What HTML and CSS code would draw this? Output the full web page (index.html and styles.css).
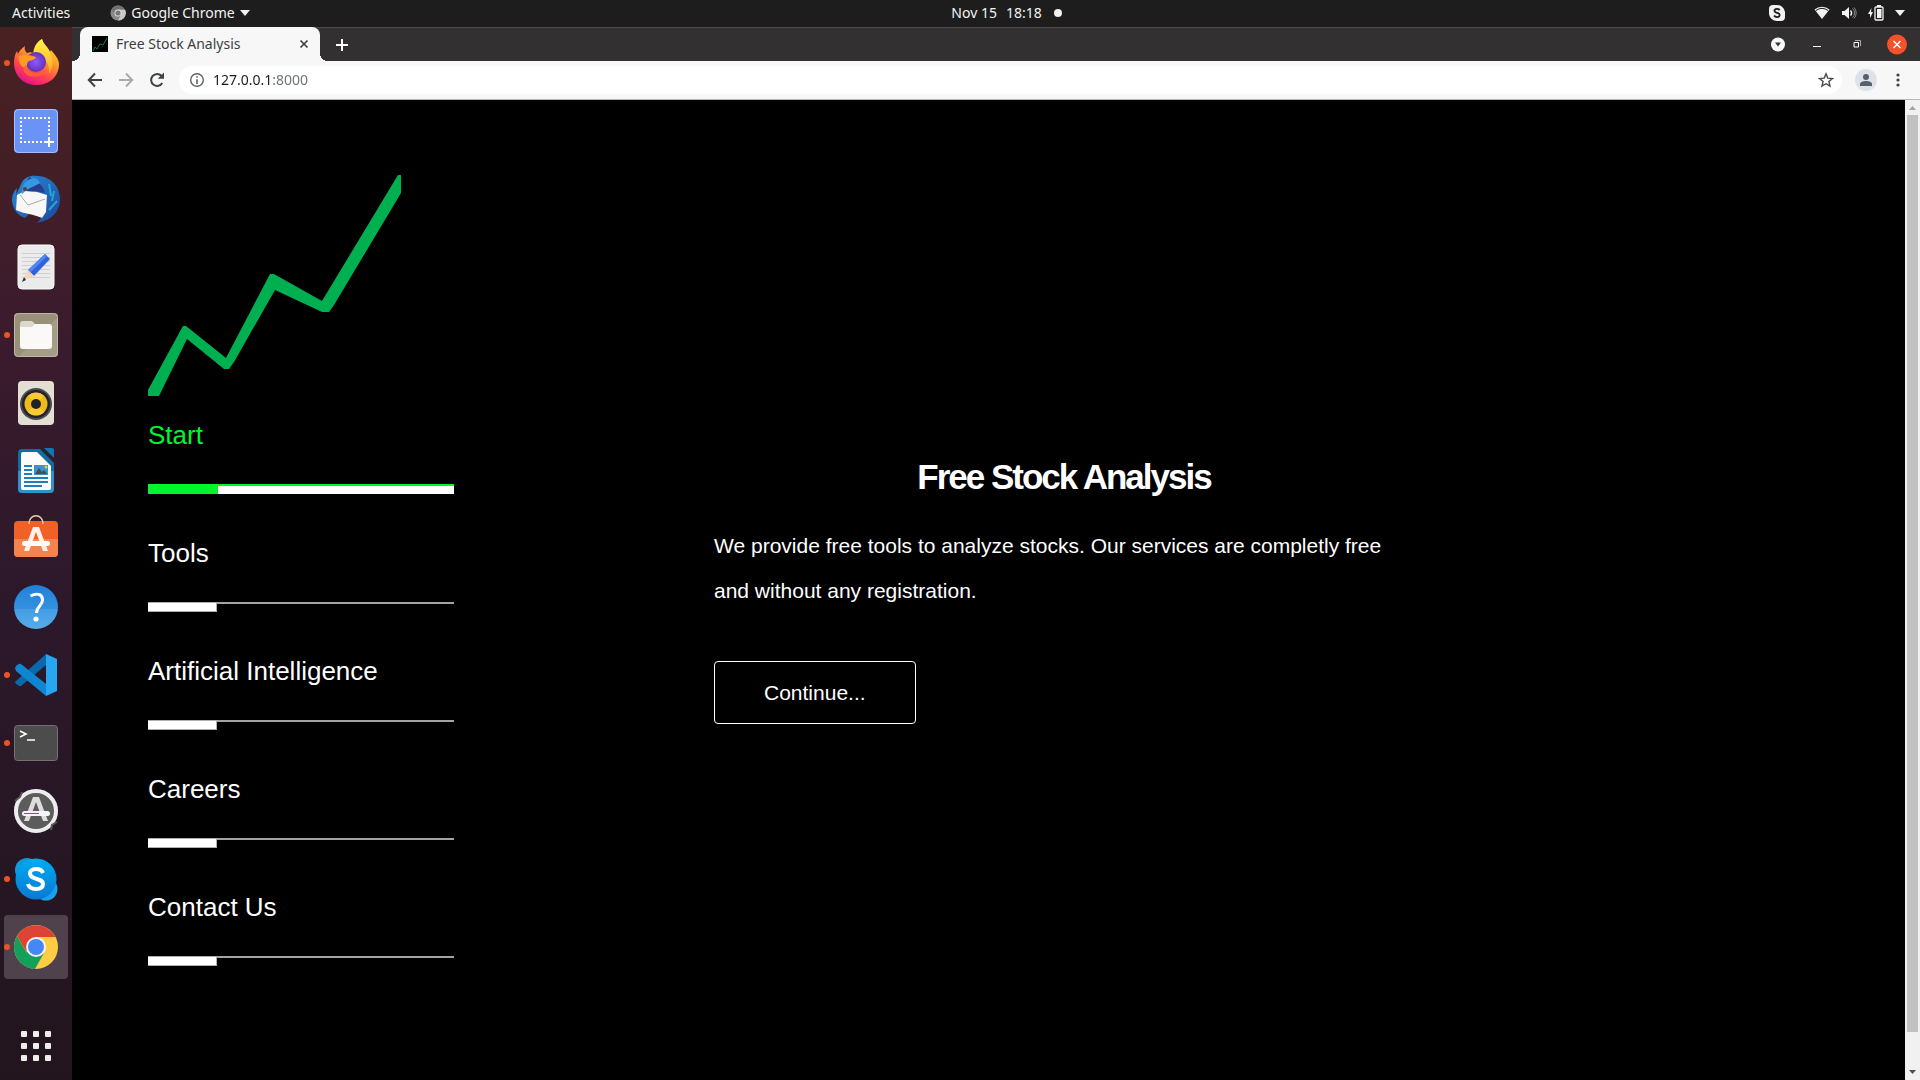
FILE: index.html
```html
<!DOCTYPE html>
<html lang="en">
<head>
<meta charset="utf-8">
<meta name="viewport" content="width=device-width, initial-scale=1">
<title>Free Stock Analysis</title>
<link rel="stylesheet" href="styles.css">
</head>
<body>
<div class="desktop">
  <header class="topbar">
    <div class="topbar-left">
      <button class="plain" type="button">Activities</button>
      <button class="plain app-menu" type="button">
        <svg width="16" height="16" viewBox="0 0 16 16"><circle cx="8" cy="8" r="7.500" fill="#8a8a8a"/><path d="M8 4.500h7A7.500 7.500 0 0 1 8 15.500l3-5.500z" fill="#c9c9c9"/><path d="M1.500 4.500A7.500 7.500 0 0 1 14.700 4.500H8L5 9.500z" fill="#737373"/><circle cx="8" cy="8" r="3.600" fill="#ddd"/><circle cx="8" cy="8" r="2.600" fill="#777"/></svg>
        <span>Google Chrome</span>
        <svg width="10" height="6" viewBox="0 0 10 6"><path d="M0 0h10L5 6z" fill="#f2f2f2"/></svg>
      </button>
    </div>
    <div class="clock"><span>Nov 15</span><span>18:18</span><span class="clock-dot"></span></div>
    <div class="tray">
      <svg class="tray-app" width="16" height="16" viewBox="0 0 16 16"><path d="M4 0h4a8 8 0 0 1 8 7v5a4 4 0 0 1-4 4H8a8 8 0 0 1-8-7V4a4 4 0 0 1 4-4z" fill="#f2f2f2"/><path d="M10.600 5.200C10 4.100 9 3.800 8 3.800c-1.400 0-2.500.7-2.500 1.900 0 2.900 5.200 1.500 5.200 4.200 0 1.400-1.200 2.200-2.700 2.200-1.300 0-2.300-.5-2.900-1.600" fill="none" stroke="#1d1d1d" stroke-width="1.800"/></svg>
      <svg width="16" height="16" viewBox="0 0 16 16"><path d="M8 14 .5 4.500a12 12 0 0 1 15 0z" fill="#f2f2f2"/><path d="M1.800 5.600a10.500 10.500 0 0 1 12.400 0" fill="none" stroke="#1d1d1d" stroke-width="1"/></svg>
      <svg width="16" height="16" viewBox="0 0 16 16"><path d="M1 6h2.500L8 2v12L3.500 10H1z" fill="#f2f2f2"/><path d="M9.500 5.500a3.500 3.500 0 0 1 0 5" fill="none" stroke="#f2f2f2" stroke-width="1.500"/><path d="M11.500 3.500a6 6 0 0 1 0 9M13 2.500a8 8 0 0 1 0 11" fill="none" stroke="#888"/></svg>
      <svg width="16" height="16" viewBox="0 0 16 16"><path d="M3.500 3 0 9h2v4l3-6H3z" fill="#f2f2f2"/><path d="M9 0h4v2H9z" fill="#f2f2f2"/><rect x="7" y="2" width="8" height="13" rx="1" fill="none" stroke="#f2f2f2" stroke-width="1.300"/><path d="M9 4h4.500v9H9z" fill="#f2f2f2"/></svg>
      <svg width="10" height="6" viewBox="0 0 10 6"><path d="M0 0h10L5 6z" fill="#f2f2f2"/></svg>
    </div>
  </header>

  <div class="workspace">
    <nav class="dock" aria-label="Dock">
      <button class="dock-item running" type="button" aria-label="Firefox">
        <svg width="48" height="48" viewBox="0 0 48 48">
          <defs><linearGradient id="ffa" x1=".8" y1="0" x2=".3" y2="1"><stop offset="0" stop-color="#ffe23a"/><stop offset=".4" stop-color="#ff9a26"/><stop offset=".72" stop-color="#ff4250"/><stop offset="1" stop-color="#e0108c"/></linearGradient><linearGradient id="ffb" x1="0" y1="0" x2="0" y2="1"><stop offset="0" stop-color="#fff44a"/><stop offset="1" stop-color="#ffa52b"/></linearGradient><radialGradient id="ffc"><stop offset="0" stop-color="#8d5cff"/><stop offset="1" stop-color="#6131b8"/></radialGradient></defs>
          <path d="M30 0c1 5 6 8 8 13l1-2c4 5 8 9 8 14 0 13-10 21-23 21S2 36 2 24c0-5 1-9 3-12l1 3c1-3 4-6 7-8-1 3 0 5 2 7 2-1 5-1 7 0 1-6 4-11 8-14z" fill="url(#ffa)"/>
          <path d="M30 0c1 5 6 8 8 13 4 7 3 15-1 22 1-12-5-17-12-18-4-1-4-4-3-7 1-4 4-8 8-10z" fill="url(#ffb)"/>
          <circle cx="24" cy="23" r="10" fill="url(#ffc)"/>
          <path d="M7 17c5-2 11-1 17 1-1 3-4 3-7 4-2 1-2 4-3 8-5-2-8-7-7-13z" fill="#ff9b22"/><path d="M14 26c2 8 12 11 19 6-3 6-15 8-20 2-2-3-2-6 1-8z" fill="#ff6038"/>
        </svg>
      </button>
      <button class="dock-item" type="button" aria-label="Screenshot">
        <svg width="48" height="48" viewBox="0 0 48 48"><rect x="2" y="2" width="44" height="44" rx="4" fill="#6b92f5"/><rect x="2.500" y="2.500" width="43" height="43" rx="4" fill="none" stroke="#a5beff"/><path d="M8 11h31M8 35h23M9 14v20M37 14v14" fill="none" stroke="#fff" stroke-width="2" stroke-dasharray="2 2"/><path d="M37 30v10M32 35h10" stroke="#fff" stroke-width="2"/></svg>
      </button>
      <button class="dock-item" type="button" aria-label="Thunderbird">
        <svg width="48" height="48" viewBox="0 0 48 48">
          <defs><linearGradient id="tb" x1="0" y1="0" x2="1" y2="1"><stop offset="0" stop-color="#2c8bd8"/><stop offset="1" stop-color="#1b479c"/></linearGradient></defs>
          <path d="M10 7C13 2 19 0 25 1c14 0 23 11 23 23 0 10-6 19-16 22l-7 2 7-8 3-18L13 43c-8-3-12-9-13-17 0-6 2-10 5-13l-1 7z" fill="url(#tb)"/>
          <path d="M17 2c6 3 14 7 16 16l-10-2-13 4 3-9z" fill="#293d8f"/><path d="M5 20 13 16l12 1 10 3-1 17-4 6C22 39 12 39 4 35z" fill="#f7f7f7"/><path d="m8 20 8 10 17-6" fill="none" stroke="#aaa"/><path d="M10 19C9 10 14 4 22 3c4 1 5 3 6 5-4 3-11 4-18 11z" fill="#3598e0"/><circle cx="13" cy="14" r="2" fill="#5b4136"/><path d="m37 9 2 12M42 16l-2 10m5 0-8 9" stroke="#23a4d8" stroke-width="2"/>
        </svg>
      </button>
      <button class="dock-item" type="button" aria-label="Text Editor">
        <svg width="48" height="48" viewBox="0 0 48 48"><rect x="6" y="2" width="36" height="44" rx="4" fill="#ebebeb" stroke="#fafafa"/><path d="M10 10.500h28M10 14.500h28M10 18.500h28M10 22.500h28M10 26.500h28M10 30.500h28M10 34.500h28" stroke="#cfcfcf"/><path d="m16 27 17-16 5 5-16 17z" fill="#2f62dc"/><path d="m16 27 17-16 2 2-17 17z" fill="#5287f0"/><path d="m16 27 6 6-12 5z" fill="#f5d6bd"/><path d="m12 34 2 3-4 2z" fill="#333"/></svg>
      </button>
      <button class="dock-item running" type="button" aria-label="Files">
        <svg width="48" height="48" viewBox="0 0 48 48"><rect x="2" y="2" width="44" height="44" rx="4" fill="#989079"/><path d="M46 6v36a4 4 0 0 1-4 4H6z" fill="#a49d87"/><rect x="2.500" y="2.500" width="43" height="43" rx="4" fill="none" stroke="#bcb6a3"/><path d="M8 13q0-3 3-3h9l3 3v6H8z" fill="#dcd8ca"/><path d="M8 16h12l3-3h14q3 0 3 3v19q0 3-3 3H11q-3 0-3-3z" fill="#faf9f7"/></svg>
      </button>
      <button class="dock-item" type="button" aria-label="Rhythmbox">
        <svg width="48" height="48" viewBox="0 0 48 48"><rect x="6" y="2" width="36" height="44" rx="4" fill="#e3dfd2"/><circle cx="24" cy="25" r="16" fill="#4b4c55"/><circle cx="24" cy="25" r="14" fill="#22232a"/><circle cx="24" cy="25" r="11.500" fill="#f0b91c"/><path d="m24 25-8-8a11.500 11.500 0 0 1 16 0zM24 25l-8 8a11.500 11.500 0 0 0 16 0z" fill="#f7ca35"/><circle cx="24" cy="25" r="5" fill="#222"/></svg>
      </button>
      <button class="dock-item" type="button" aria-label="LibreOffice Writer">
        <svg width="48" height="48" viewBox="0 0 48 48"><path d="M10 2h18l14 14v26a4 4 0 0 1-4 4H10a4 4 0 0 1-4-4V6a4 4 0 0 1 4-4z" fill="#0f6da5"/><path d="M6 24h36v18a4 4 0 0 1-4 4H10a4 4 0 0 1-4-4z" fill="#2f93c8"/><path d="M11 5h14l14 14v22q0 2-2 2H11q-2 0-2-2V7q0-2 2-2z" fill="#fbfbfb"/><path d="M32 1h8q2 0 2 2v8z" fill="#1276b0"/><path d="M12 19h8M12 23h8M12 27h8M12 31h24M12 35h24M12 39h18" stroke="#1c7fb8" stroke-width="2"/><path d="M22 18h14v10H22z" fill="#3a92cc"/><path d="m23 27 4-6 3 4 2-2 3 4z" fill="#4d4d4d"/><circle cx="34" cy="20" r="1.500" fill="#f5c93a"/></svg>
      </button>
      <button class="dock-item" type="button" aria-label="Ubuntu Software">
        <svg width="48" height="48" viewBox="0 0 48 48"><path d="M6 6h36a4 4 0 0 1 4 4v28a4 4 0 0 1-4 4H6a4 4 0 0 1-4-4V10a4 4 0 0 1 4-4z" fill="#f06127"/><path d="M2 24h44v14a4 4 0 0 1-4 4H6a4 4 0 0 1-4-4z" fill="#f48350"/><path d="M17 9c0-11 14-11 14 0" fill="none" stroke="#f0cda0" stroke-width="1.500"/><path d="m21 12-9 24h5l7-19 7 19h5l-9-24z" fill="#fff0ea"/><rect x="10" y="26" width="28" height="5" rx="2.500" fill="#fff"/></svg>
      </button>
      <button class="dock-item" type="button" aria-label="Help">
        <svg width="48" height="48" viewBox="0 0 48 48"><defs><linearGradient id="hp" x1="0" y1="0" x2="0" y2="1"><stop offset="0" stop-color="#2080d9"/><stop offset=".54" stop-color="#3490e0"/><stop offset=".55" stop-color="#459de4"/><stop offset="1" stop-color="#55ace8"/></linearGradient></defs><circle cx="24" cy="24" r="22" fill="url(#hp)"/><path d="M18.500 13c8-4 12-1 12 4 0 6-6 6-6 13" fill="none" stroke="#fff" stroke-width="3"/><circle cx="24" cy="36" r="2.600" fill="#fff"/></svg>
      </button>
      <button class="dock-item running" type="button" aria-label="Visual Studio Code">
        <svg width="48" height="48" viewBox="0 0 48 48"><path d="M4 30 34 3v11L9 35c-2 1-6-3-6-4z" fill="#0a69ad"/><path d="M3 17c1-2 3-5 6-4l25 20v12L4 20z" fill="#0f86d4"/><path d="m34 3 11 5v32l-11 5z" fill="#27a7f2"/></svg>
      </button>
      <button class="dock-item running" type="button" aria-label="Terminal">
        <svg width="48" height="48" viewBox="0 0 48 48"><rect x="2.500" y="6.500" width="43" height="35" rx="3" fill="#4c4c4c" stroke="#727272"/><path d="m8 12 6 3-6 3M15 21h8" fill="none" stroke="#fff" stroke-width="1.600"/></svg>
      </button>
      <button class="dock-item" type="button" aria-label="Software Updater">
        <svg width="48" height="48" viewBox="0 0 48 48"><circle cx="24" cy="24" r="22" fill="#5c5c5c"/><circle cx="24" cy="24" r="20" fill="none" stroke="#ededed" stroke-width="4"/><path d="m3 14 5-4 2-5M39 43l1-5 5-3" fill="none" stroke="#555" stroke-width="2"/><path d="m21 10-9 24h5l7-19 7 19h5l-9-24z" fill="#ddd"/><rect x="10" y="24" width="28" height="5" rx="2.500" fill="#f5f5f5"/><path d="M12 26.500h15" stroke="#924d8b"/></svg>
      </button>
      <button class="dock-item running" type="button" aria-label="Skype">
        <svg width="48" height="48" viewBox="0 0 48 48"><defs><linearGradient id="sk" x1="0" y1="0" x2="0" y2="1"><stop offset="0" stop-color="#00acf0"/><stop offset="1" stop-color="#0878d4"/></linearGradient></defs><circle cx="15" cy="15" r="12" fill="#1098d8"/><circle cx="34" cy="34" r="11.500" fill="#1aa0e8"/><circle cx="24" cy="24" r="20.500" fill="url(#sk)"/><path d="M31 18c-1-3-4-4-7-4-4 0-6 2-6 4 0 8 13 4 13 11 0 4-4 5-7 5-4 0-7-1-8-5" fill="none" stroke="#fff" stroke-width="4"/></svg>
      </button>
      <button class="dock-item running active" type="button" aria-label="Google Chrome">
        <svg width="48" height="48" viewBox="0 0 48 48"><circle cx="24" cy="24" r="22" fill="#fc4"/><path d="M24 24v0L14.500 29.500 5 13A22 22 0 0 0 23 46l9-16z" fill="#14a05a"/><path d="M5 13a22 22 0 0 1 38.500 1H24l-9.500 15z" fill="#dd4436"/><circle cx="24" cy="24" r="10" fill="#f4f4f4"/><circle cx="24" cy="24" r="8" fill="#4587f4"/></svg>
      </button>
      <button class="dock-item apps" type="button" aria-label="Show Applications">
        <svg width="48" height="48" viewBox="0 0 48 48" fill="#f0eeec"><rect x="9" y="9" width="6" height="6" rx="1"/><rect x="21" y="9" width="6" height="6" rx="1"/><rect x="33" y="9" width="6" height="6" rx="1"/><rect x="9" y="21" width="6" height="6" rx="1"/><rect x="21" y="21" width="6" height="6" rx="1"/><rect x="33" y="21" width="6" height="6" rx="1"/><rect x="9" y="33" width="6" height="6" rx="1"/><rect x="21" y="33" width="6" height="6" rx="1"/><rect x="33" y="33" width="6" height="6" rx="1"/></svg>
      </button>
    </nav>

    <div class="browser">
      <div class="tabstrip">
        <div class="tab">
          <svg width="16" height="16" viewBox="0 0 16 16"><path d="M0 0h16v16H0z" fill="#000"/><path d="m1 15 2-4 2 2 3-5 3 1 4-7" fill="none" stroke="#00813d"/></svg>
          <span class="tab-title">Free Stock Analysis</span>
          <button class="plain" type="button" aria-label="Close tab"><svg width="16" height="16" viewBox="0 0 16 16"><path d="m4.500 4.500 7 7m0-7-7 7" stroke="#3c4043" stroke-width="1.700"/></svg></button>
        </div>
        <button class="plain new-tab" type="button" aria-label="New tab"><svg width="16" height="16" viewBox="0 0 16 16"><path d="M8 2v12M2 8h12" stroke="#fff" stroke-width="2"/></svg></button>
        <div class="window-controls">
          <button class="plain" type="button" aria-label="Search tabs"><svg width="24" height="24" viewBox="0 0 24 24"><circle cx="13" cy="11.500" r="7" fill="#fafafa"/><path d="M10 9.500h6l-3 4z" fill="#333"/></svg></button>
          <button class="plain" type="button" aria-label="Minimize"><svg width="24" height="24" viewBox="0 0 24 24"><path d="M8 13h8v1H8z" fill="#fff"/></svg></button>
          <button class="plain" type="button" aria-label="Restore"><svg width="24" height="24" viewBox="0 0 24 24"><path d="M9 9.500h4.500V14H9z" fill="none" stroke="#fff"/><path d="M10 7.500h5.500V13" fill="none" stroke="#aaa"/></svg></button>
          <button class="plain" type="button" aria-label="Close"><svg width="24" height="24" viewBox="0 0 24 24"><circle cx="12" cy="11.500" r="10" fill="#f4522b"/><path d="m8.500 8 7 7m0-7-7 7" stroke="#fff" stroke-width="1.500"/></svg></button>
        </div>
      </div>

      <div class="toolbar">
        <button class="plain" type="button" aria-label="Back"><svg width="18" height="18" viewBox="0 0 18 18"><path d="M16 9H3m6-6.500L2.800 9 9 15.500" fill="none" stroke="#3f4245" stroke-width="2"/></svg></button>
        <button class="plain" type="button" aria-label="Forward"><svg width="18" height="18" viewBox="0 0 18 18"><path d="M2 9h13M9 2.500 15.200 9 9 15.500" fill="none" stroke="#a9abad" stroke-width="2"/></svg></button>
        <button class="plain" type="button" aria-label="Reload"><svg width="18" height="18" viewBox="0 0 18 18"><path d="M14.300 12a6 6 0 1 1-.8-7.200" fill="none" stroke="#3f4245" stroke-width="2"/><path d="M16 1.500v6.300H9.700z" fill="#3f4245"/></svg></button>
        <div class="omnibox">
          <svg width="16" height="16" viewBox="0 0 16 16"><circle cx="8" cy="8" r="6.300" fill="none" stroke="#5f6368" stroke-width="1.400"/><path d="M7.200 7.200h1.600V12H7.200zM7.200 4.300h1.600v1.500H7.200z" fill="#5f6368"/></svg>
          <input class="address" type="text" value="127.0.0.1:8000" aria-label="Address">
          <button class="plain" type="button" aria-label="Bookmark this page"><svg width="16" height="16" viewBox="0 0 16 16"><path d="m8 1.800 1.800 4.300 4.700.4-3.600 3 1.100 4.600L8 11.700l-4 2.400 1.100-4.600-3.600-3 4.700-.4z" fill="none" stroke="#47494c" stroke-width="1.400"/></svg></button>
        </div>
        <button class="plain" type="button" aria-label="Profile"><svg width="22" height="22" viewBox="0 0 22 22"><circle cx="11" cy="11" r="11" fill="#dee1e6"/><circle cx="11" cy="8" r="3" fill="#54626f"/><path d="M5 17v-2c0-2 3-3 6-3s6 1 6 3v2z" fill="#54626f"/></svg></button>
        <button class="plain" type="button" aria-label="Menu"><svg width="16" height="16" viewBox="0 0 16 16" fill="#3f4245"><circle cx="8" cy="3" r="1.600"/><circle cx="8" cy="8" r="1.600"/><circle cx="8" cy="13" r="1.600"/></svg></button>
      </div>

      <div class="viewport">
        <div class="page">
          <aside class="menu">
            <svg class="logo" width="253" height="221" viewBox="0 0 253 221"><path d="M0 215 35 151h3l40 32 44-84h4l48 27L250 0h3v18l-67 112-5 7h-7l-47-22-41 72-5 7h-5L39 164 11 221H0z" fill="#00b050"/></svg>
            <nav class="menu-list" aria-label="Main">
              <a class="menu-link current" href="#start">Start<span class="rule"><span class="mark"></span></span></a>
              <a class="menu-link" href="#tools">Tools<span class="rule"><span class="mark"></span></span></a>
              <a class="menu-link" href="#ai">Artificial Intelligence<span class="rule"><span class="mark"></span></span></a>
              <a class="menu-link" href="#careers">Careers<span class="rule"><span class="mark"></span></span></a>
              <a class="menu-link" href="#contact">Contact Us<span class="rule"><span class="mark"></span></span></a>
            </nav>
          </aside>
          <main class="hero">
            <h1>Free Stock Analysis</h1>
            <p>We provide free tools to analyze stocks. Our services are completly free and without any registration.</p>
            <button class="continue" type="button">Continue...</button>
          </main>
        </div>
        <div class="scrollbar" aria-hidden="true">
          <svg width="15" height="15" viewBox="0 0 15 15"><path d="M4 10h7L7.500 6z" fill="#a3a3a3"/></svg>
          <div class="track"><div class="thumb"></div></div>
          <svg width="15" height="15" viewBox="0 0 15 15"><path d="M4 5h7L7.500 9z" fill="#505050"/></svg>
        </div>
      </div>
    </div>
  </div>
</div>
</body>
</html>
```
FILE: styles.css
```css
* { box-sizing: border-box; }

body {
  margin: 0;
  background: #000;
  font-family: "Liberation Sans", Arial, sans-serif;
}

svg { display: block; flex: none; }

.desktop {
  display: flex;
  flex-direction: column;
  min-height: 100vh;
}

.plain {
  display: flex;
  align-items: center;
  padding: 0;
  border: 0;
  background: none;
  color: inherit;
  font: inherit;
}

/* System bar */
.topbar {
  display: grid;
  grid-template-columns: 1fr auto 1fr;
  align-items: center;
  height: 27px;
  padding: 0 15px 1px 12px;
  background: #1d1d1d;
  color: #f2f2f2;
  font: 14px/20px "Noto Sans", sans-serif;
}

.topbar-left { display: flex; gap: 40px; }
.app-menu { gap: 5px; }
.clock { display: flex; align-items: center; gap: 9px; padding-left: 96px; }
.clock-dot { width: 8px; height: 8px; margin-left: 3px; border-radius: 50%; background: #f2f2f2; }
.tray { display: flex; align-items: center; justify-content: flex-end; gap: 11px; }
.tray-app { margin-right: 18px; }

.workspace { display: flex; flex: 1; }

/* Dock */
.dock {
  display: flex;
  flex-direction: column;
  align-items: center;
  gap: 4px;
  width: 72px;
  padding: 4px 0 2px;
  background: linear-gradient(#4a2121, #3a1b2d 30%, #2c182b 55%, #22151d);
}

.dock-item {
  position: relative;
  display: grid;
  place-items: center;
  width: 64px;
  height: 64px;
  padding: 0;
  border: 0;
  border-radius: 4px;
  background: none;
}

.dock-item.active { background: #4f424d; }

.running::before {
  content: "";
  position: absolute;
  top: 29px;
  left: 0;
  width: 6px;
  height: 6px;
  border-radius: 50%;
  background: #e95420;
}

.apps { margin-top: auto; }

/* Browser window */
.browser { display: flex; flex: 1; flex-direction: column; min-width: 0; }

.tabstrip {
  display: flex;
  align-items: center;
  height: 34px;
  padding: 0 11px 0 8px;
  border-top: 1px solid #4a4848;
  background: #333031;
}

.tab {
  position: relative;
  display: flex;
  align-items: center;
  gap: 8px;
  align-self: stretch;
  width: 240px;
  margin-top: -1px;
  padding: 0 8px 0 12px;
  border-radius: 8px 8px 0 0;
  background: #f7f7f7;
  color: #3c4043;
  font: 14px/20px "Noto Sans", sans-serif;
}

.tab::before,
.tab::after {
  content: "";
  position: absolute;
  bottom: 0;
  width: 8px;
  height: 8px;
}

.tab::before { left: -8px; background: radial-gradient(circle at 0 0, #333031 8px, #f7f7f7 8px); }
.tab::after { right: -8px; background: radial-gradient(circle at 100% 0, #333031 8px, #f7f7f7 8px); }
.tab-title { flex: 1; white-space: nowrap; }
.new-tab { margin-left: 14px; }
.window-controls { display: flex; gap: 16px; margin-left: auto; }

.toolbar {
  display: flex;
  align-items: center;
  gap: 13px;
  height: 39px;
  padding: 0 14px 0 14px;
  border-bottom: 1px solid #b8b8b8;
  background: #f7f7f7;
}

.omnibox {
  display: flex;
  flex: 1;
  align-items: center;
  gap: 8px;
  height: 28px;
  padding: 0 8px 0 10px;
  border-radius: 14px;
  background: #fff;
}

.address {
  flex: 1;
  min-width: 0;
  padding: 0;
  border: 0;
  outline: 0;
  background: linear-gradient(90deg, #1a1c1f 59px, #6b6f73 59px) text;
  color: transparent;
  font: 14px/20px "Noto Sans", sans-serif;
}

.viewport { display: flex; flex: 1; }

/* Site */
.page {
  display: grid;
  flex: 1;
  grid-template-columns: 306fr 700fr;
  column-gap: 260px;
  align-items: start;
  padding: 75px 491px 0 76px;
  background: #000;
  color: #fff;
}

.menu-list {
  display: flex;
  flex-direction: column;
  gap: 39px;
  margin-top: 19px;
}

.menu-link {
  display: flex;
  flex-direction: column;
  gap: 29px;
  color: #fff;
  font-size: 26px;
  line-height: 40px;
  text-decoration: none;
}

.rule {
  height: 10px;
  background: linear-gradient(#a3a3a3, #a3a3a3) top / 100% 2px no-repeat;
}

.mark {
  display: block;
  width: 69px;
  height: 10px;
  border: solid #b0b0b0;
  border-width: 1px 1px 1px 0;
  background: #fff;
}

.current { color: #00f62c; }
.current .rule { border-top: 2px solid #00f62c; background: #fff; }
.current .mark { width: 70px; height: 8px; border: 0; background: #00f62c; }

.hero { margin-top: 280px; }

.hero h1 {
  margin: 0;
  font-size: 35px;
  line-height: 44px;
  letter-spacing: -2px;
  text-align: center;
}

.hero p {
  margin: 24px 0 48px;
  font-size: 21px;
  line-height: 45px;
}

.continue {
  padding: 19px 49px;
  border: 1px solid #fff;
  border-radius: 4px;
  background: none;
  color: #fff;
  font: 21px/23px "Liberation Sans", Arial, sans-serif;
}

.scrollbar {
  display: flex;
  flex-direction: column;
  width: 15px;
  background: #f1f1f1;
}

.track { flex: 1; padding: 0 2px; }
.thumb { height: 96%; min-height: 917px; background: #c1c1c1; }
```
